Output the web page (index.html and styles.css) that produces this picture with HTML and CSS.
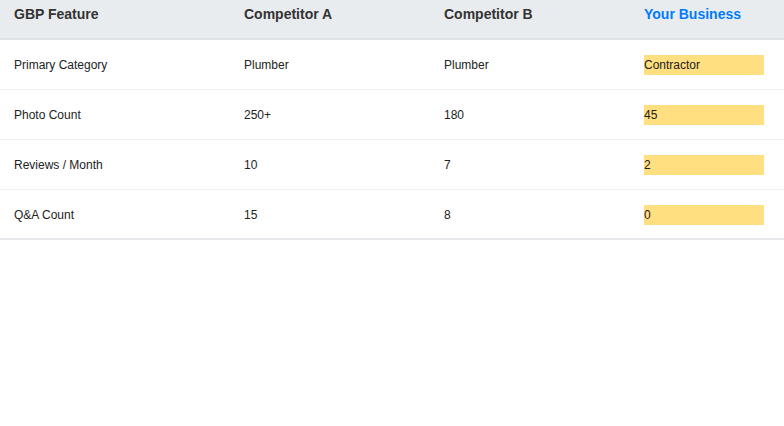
FILE: index.html
```html
<!DOCTYPE html>
<html>
<head>
<meta charset="utf-8">
<link rel="stylesheet" href="styles.css">
</head>
<body>
<table class="compare">
  <colgroup>
    <col class="c1"><col class="c2"><col class="c3"><col class="c4">
  </colgroup>
  <thead>
    <tr>
      <th>GBP Feature</th>
      <th>Competitor A</th>
      <th>Competitor B</th>
      <th class="you">Your Business</th>
    </tr>
  </thead>
  <tbody>
    <tr>
      <td>Primary Category</td><td>Plumber</td><td>Plumber</td>
      <td><span class="hl">Contractor</span></td>
    </tr>
    <tr>
      <td>Photo Count</td><td>250+</td><td>180</td>
      <td><span class="hl">45</span></td>
    </tr>
    <tr>
      <td>Reviews / Month</td><td>10</td><td>7</td>
      <td><span class="hl">2</span></td>
    </tr>
    <tr>
      <td>Q&amp;A Count</td><td>15</td><td>8</td>
      <td><span class="hl">0</span></td>
    </tr>
  </tbody>
</table>
</body>
</html>
```

FILE: styles.css
```css
html, body {
  margin: 0;
  padding: 0;
  background: #fff;
}
body {
  font-family: "Liberation Sans", Arial, sans-serif;
  color: #333;
}
.compare {
  width: 784px;
  border-collapse: collapse;
  table-layout: fixed;
}
.c1 { width: 230px; }
.c2 { width: 200px; }
.c3 { width: 200px; }
.c4 { width: 154px; }
.compare th {
  background: #e9ecef;
  text-align: left;
  font-weight: bold;
  font-size: 14px;
  line-height: 16px;
  height: 16px;
  padding: 6px 14px 16px;
  color: #333;
  border-bottom: 2px solid #dee2e6;
}
.compare th.you {
  color: #007bff;
}
.compare td {
  font-size: 12px;
  line-height: 14px;
  height: 50px;
  padding: 1px 14px 0;
  box-sizing: border-box;
  vertical-align: middle;
  border-bottom: 1px solid #f1f1f1;
  color: #222;
}
.compare tbody tr:last-child td {
  height: 50px;
  padding-top: 2px;
  border-bottom: 2px solid #e6e6eb;
}
.hl {
  display: block;
  width: 120px;
  height: 20px;
  line-height: 20px;
  background: #ffdf80;
}
```
